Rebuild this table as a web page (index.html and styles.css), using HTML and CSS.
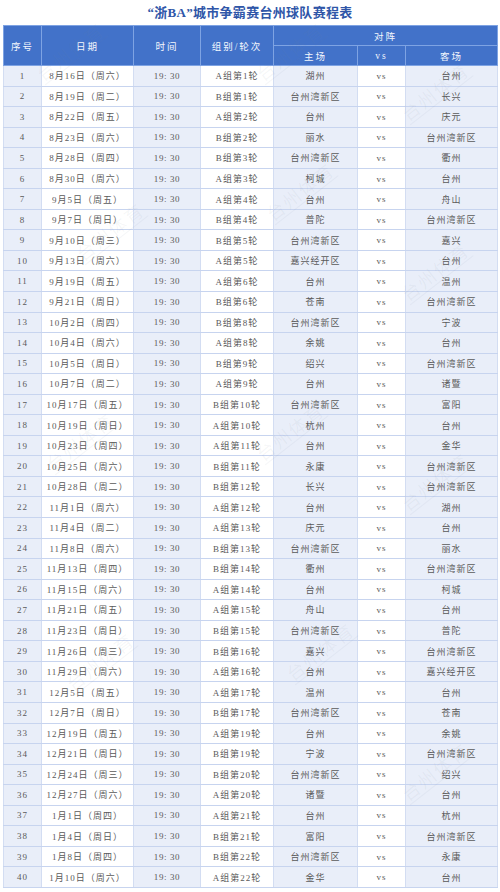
FILE: index.html
```html
<!DOCTYPE html>
<html lang="zh-CN">
<head>
<meta charset="utf-8">
<title>“浙BA”城市争霸赛台州球队赛程表</title>
<link rel="stylesheet" href="styles.css">
</head>
<body>
<div class="page">
  <h1 class="title">“浙BA”城市争霸赛台州球队赛程表</h1>
  <table class="sched">
    <colgroup>
      <col class="c-no"><col class="c-date"><col class="c-time"><col class="c-grp"><col class="c-home"><col class="c-vs"><col class="c-away">
    </colgroup>
    <thead>
      <tr class="h1">
        <th rowspan="2">序号</th><th rowspan="2">日期</th><th rowspan="2">时间</th><th rowspan="2">组别/轮次</th><th colspan="3">对阵</th>
      </tr>
      <tr class="h2"><th>主场</th><th>vs</th><th>客场</th></tr>
    </thead>
    <tbody>
      <tr><td>1</td><td>8月16日（周六）</td><td>19: 30</td><td>A组第1轮</td><td>湖州</td><td>vs</td><td>台州</td></tr>
      <tr><td>2</td><td>8月19日（周二）</td><td>19: 30</td><td>B组第1轮</td><td>台州湾新区</td><td>vs</td><td>长兴</td></tr>
      <tr><td>3</td><td>8月22日（周五）</td><td>19: 30</td><td>A组第2轮</td><td>台州</td><td>vs</td><td>庆元</td></tr>
      <tr><td>4</td><td>8月23日（周六）</td><td>19: 30</td><td>B组第2轮</td><td>丽水</td><td>vs</td><td>台州湾新区</td></tr>
      <tr><td>5</td><td>8月28日（周四）</td><td>19: 30</td><td>B组第3轮</td><td>台州湾新区</td><td>vs</td><td>衢州</td></tr>
      <tr><td>6</td><td>8月30日（周六）</td><td>19: 30</td><td>A组第3轮</td><td>柯城</td><td>vs</td><td>台州</td></tr>
      <tr><td>7</td><td>9月5日（周五）</td><td>19: 30</td><td>A组第4轮</td><td>台州</td><td>vs</td><td>舟山</td></tr>
      <tr><td>8</td><td>9月7日（周日）</td><td>19: 30</td><td>B组第4轮</td><td>普陀</td><td>vs</td><td>台州湾新区</td></tr>
      <tr><td>9</td><td>9月10日（周三）</td><td>19: 30</td><td>B组第5轮</td><td>台州湾新区</td><td>vs</td><td>嘉兴</td></tr>
      <tr><td>10</td><td>9月13日（周六）</td><td>19: 30</td><td>A组第5轮</td><td>嘉兴经开区</td><td>vs</td><td>台州</td></tr>
      <tr><td>11</td><td>9月19日（周五）</td><td>19: 30</td><td>A组第6轮</td><td>台州</td><td>vs</td><td>温州</td></tr>
      <tr><td>12</td><td>9月21日（周日）</td><td>19: 30</td><td>B组第6轮</td><td>苍南</td><td>vs</td><td>台州湾新区</td></tr>
      <tr><td>13</td><td>10月2日（周四）</td><td>19: 30</td><td>B组第8轮</td><td>台州湾新区</td><td>vs</td><td>宁波</td></tr>
      <tr><td>14</td><td>10月4日（周六）</td><td>19: 30</td><td>A组第8轮</td><td>余姚</td><td>vs</td><td>台州</td></tr>
      <tr><td>15</td><td>10月5日（周日）</td><td>19: 30</td><td>B组第9轮</td><td>绍兴</td><td>vs</td><td>台州湾新区</td></tr>
      <tr><td>16</td><td>10月7日（周二）</td><td>19: 30</td><td>A组第9轮</td><td>台州</td><td>vs</td><td>诸暨</td></tr>
      <tr><td>17</td><td>10月17日（周五）</td><td>19: 30</td><td>B组第10轮</td><td>台州湾新区</td><td>vs</td><td>富阳</td></tr>
      <tr><td>18</td><td>10月19日（周日）</td><td>19: 30</td><td>A组第10轮</td><td>杭州</td><td>vs</td><td>台州</td></tr>
      <tr><td>19</td><td>10月23日（周四）</td><td>19: 30</td><td>A组第11轮</td><td>台州</td><td>vs</td><td>金华</td></tr>
      <tr><td>20</td><td>10月25日（周六）</td><td>19: 30</td><td>B组第11轮</td><td>永康</td><td>vs</td><td>台州湾新区</td></tr>
      <tr><td>21</td><td>10月28日（周二）</td><td>19: 30</td><td>B组第12轮</td><td>长兴</td><td>vs</td><td>台州湾新区</td></tr>
      <tr><td>22</td><td>11月1日（周六）</td><td>19: 30</td><td>A组第12轮</td><td>台州</td><td>vs</td><td>湖州</td></tr>
      <tr><td>23</td><td>11月4日（周二）</td><td>19: 30</td><td>A组第13轮</td><td>庆元</td><td>vs</td><td>台州</td></tr>
      <tr><td>24</td><td>11月8日（周六）</td><td>19: 30</td><td>B组第13轮</td><td>台州湾新区</td><td>vs</td><td>丽水</td></tr>
      <tr><td>25</td><td>11月13日（周四）</td><td>19: 30</td><td>B组第14轮</td><td>衢州</td><td>vs</td><td>台州湾新区</td></tr>
      <tr><td>26</td><td>11月15日（周六）</td><td>19: 30</td><td>A组第14轮</td><td>台州</td><td>vs</td><td>柯城</td></tr>
      <tr><td>27</td><td>11月21日（周五）</td><td>19: 30</td><td>A组第15轮</td><td>舟山</td><td>vs</td><td>台州</td></tr>
      <tr><td>28</td><td>11月23日（周日）</td><td>19: 30</td><td>B组第15轮</td><td>台州湾新区</td><td>vs</td><td>普陀</td></tr>
      <tr><td>29</td><td>11月26日（周三）</td><td>19: 30</td><td>B组第16轮</td><td>嘉兴</td><td>vs</td><td>台州湾新区</td></tr>
      <tr><td>30</td><td>11月29日（周六）</td><td>19: 30</td><td>A组第16轮</td><td>台州</td><td>vs</td><td>嘉兴经开区</td></tr>
      <tr><td>31</td><td>12月5日（周五）</td><td>19: 30</td><td>A组第17轮</td><td>温州</td><td>vs</td><td>台州</td></tr>
      <tr><td>32</td><td>12月7日（周日）</td><td>19: 30</td><td>B组第17轮</td><td>台州湾新区</td><td>vs</td><td>苍南</td></tr>
      <tr><td>33</td><td>12月19日（周五）</td><td>19: 30</td><td>A组第19轮</td><td>台州</td><td>vs</td><td>余姚</td></tr>
      <tr><td>34</td><td>12月21日（周日）</td><td>19: 30</td><td>B组第19轮</td><td>宁波</td><td>vs</td><td>台州湾新区</td></tr>
      <tr><td>35</td><td>12月24日（周三）</td><td>19: 30</td><td>B组第20轮</td><td>台州湾新区</td><td>vs</td><td>绍兴</td></tr>
      <tr><td>36</td><td>12月27日（周六）</td><td>19: 30</td><td>A组第20轮</td><td>诸暨</td><td>vs</td><td>台州</td></tr>
      <tr><td>37</td><td>1月1日（周四）</td><td>19: 30</td><td>A组第21轮</td><td>台州</td><td>vs</td><td>杭州</td></tr>
      <tr><td>38</td><td>1月4日（周日）</td><td>19: 30</td><td>B组第21轮</td><td>富阳</td><td>vs</td><td>台州湾新区</td></tr>
      <tr><td>39</td><td>1月8日（周四）</td><td>19: 30</td><td>B组第22轮</td><td>台州湾新区</td><td>vs</td><td>永康</td></tr>
      <tr><td>40</td><td>1月10日（周六）</td><td>19: 30</td><td>A组第22轮</td><td>金华</td><td>vs</td><td>台州</td></tr>
    </tbody>
  </table>
  <div class="wm" aria-hidden="true">
    <span class="w w1">台州体育</span><span class="w w2">台州体育</span><span class="w w3">台州体育</span>
    <span class="w w4">台州体育</span><span class="w w5">台州体育</span><span class="w w6">台州体育</span>
    <span class="w w7">台州体育</span><span class="w w8">台州体育</span><span class="w w9">台州体育</span>
    <span class="w w10">台州体育</span><span class="w w11">台州体育</span><span class="w w12">台州体育</span>
  </div>
</div>
</body>
</html>
```

FILE: styles.css
```css
* { box-sizing: border-box; }
html, body { margin: 0; padding: 0; background: #ffffff; }
body {
  font-family: "Liberation Serif", "Noto Sans CJK SC", serif;
  color: #555555;
}
.page {
  position: relative;
  width: 500px;
  height: 892px;
  overflow: hidden;
  padding: 0 3px;
}
.title {
  margin: 0;
  height: 25px;
  line-height: 26px;
  text-align: center;
  font-family: "Liberation Serif", "Noto Sans CJK SC", serif;
  font-weight: 700;
  font-size: 13px;
  color: #2f56a8;
  letter-spacing: 0.3px;
}
.sched {
  width: 494px;
  border-collapse: collapse;
  table-layout: fixed;
  border: 1px solid #b9c8e6;
}
.c-no { width: 38px; }
.c-date { width: 92px; }
.c-time { width: 67px; }
.c-grp { width: 73px; }
.c-home { width: 84px; }
.c-vs { width: 48px; }
.c-away { width: 92px; }

.sched th {
  background: #4272c9;
  color: #f4f7fd;
  font-weight: 400;
  font-size: 9.5px;
  letter-spacing: 2px;
  border: 1px solid #7ea3e3;
  padding: 0;
  text-align: center;
  vertical-align: middle;
}
.sched thead tr { height: 20px; }
.sched tbody tr { height: 20.55px; }
.sched td {
  padding: 0;
  text-align: center;
  vertical-align: middle;
  font-size: 9px;
  letter-spacing: 1px;
  border-top: 1px solid #c7d4ef;
  border-bottom: 1px solid #c7d4ef;
  border-left: 1px solid #d3ddf2;
  border-right: 1px solid #d3ddf2;
  white-space: nowrap;
  color: #5a5a5a;
}
.sched td:nth-child(1),
.sched td:nth-child(3),
.sched td:nth-child(5),
.sched td:nth-child(7) { background: #e9eef9; }
.sched td:nth-child(2),
.sched td:nth-child(4),
.sched td:nth-child(6) { background: #ffffff; }
.sched td:nth-child(3) { letter-spacing: 0.6px; }

.wm {
  position: absolute;
  inset: 0;
  pointer-events: none;
}
.w {
  position: absolute;
  font-family: "Noto Sans CJK SC", sans-serif;
  font-size: 18px;
  line-height: 22px;
  letter-spacing: 2px;
  color: rgba(120, 130, 150, 0.07);
  transform: rotate(-38deg);
  white-space: nowrap;
  border-bottom: 1px solid rgba(120, 130, 150, 0.07);
}
.w1 { left: 30px; top: 40px; }
.w2 { left: 250px; top: 40px; }
.w3 { left: 395px; top: 80px; }
.w4 { left: 70px; top: 220px; }
.w5 { left: 260px; top: 180px; }
.w6 { left: 395px; top: 260px; }
.w7 { left: 40px; top: 430px; }
.w8 { left: 250px; top: 420px; }
.w9 { left: 395px; top: 470px; }
.w10 { left: 60px; top: 650px; }
.w11 { left: 280px; top: 640px; }
.w12 { left: 395px; top: 760px; }
```
